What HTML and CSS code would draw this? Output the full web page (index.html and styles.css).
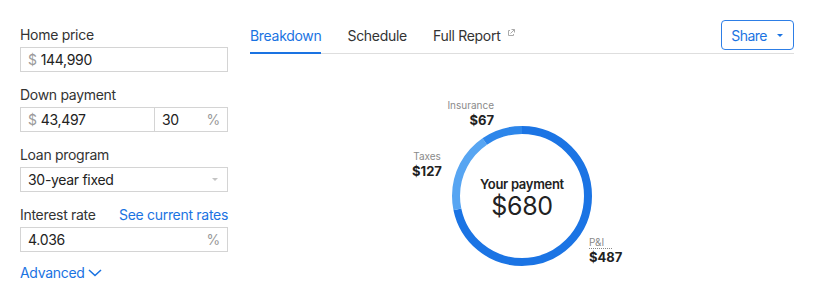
FILE: index.html
```html
<!DOCTYPE html>
<html lang="en">

<head>
    <meta charset="UTF-8">
    <meta name="viewport" content="width=device-width, initial-scale=1.0">
    <title>Mortgage Calculator</title>
    <link rel="stylesheet" href="styles.css">
</head>

<body>
    <div id="calculator">
        <div id="inputPanel">
            <div class="fieldGroup">
                <label class="fieldLabel" for="homePrice">Home price</label>
                <div class="field">
                    <span class="prefix">$</span>
                    <input type="text" id="homePrice" value="144,990">
                </div>
            </div>

            <div class="fieldGroup">
                <label class="fieldLabel" for="downPayment">Down payment</label>
                <div class="fieldPair">
                    <div class="field amountField">
                        <span class="prefix">$</span>
                        <input type="text" id="downPayment" value="43,497">
                    </div>
                    <div class="field percentField">
                        <input type="text" id="downPercent" value="30">
                        <span class="suffix">%</span>
                    </div>
                </div>
            </div>

            <div class="fieldGroup">
                <label class="fieldLabel" for="loanProgram">Loan program</label>
                <div class="field selectField">
                    <span id="loanProgram" class="selectValue">30-year fixed</span>
                    <span class="selectCaret"></span>
                </div>
            </div>

            <div class="fieldGroup">
                <div class="labelRow">
                    <label class="fieldLabel" for="interestRate">Interest rate</label>
                    <a href="#" class="link">See current rates</a>
                </div>
                <div class="field">
                    <input type="text" id="interestRate" value="4.036">
                    <span class="suffix">%</span>
                </div>
            </div>

            <a href="#" class="link advanced">Advanced
                <svg width="14" height="8" viewBox="0 0 14 8">
                    <polyline points="1,1 7,6.5 13,1" fill="none" stroke="currentColor" stroke-width="1.6" />
                </svg>
            </a>
        </div>

        <div id="resultPanel">
            <div id="tabBar">
                <nav class="tabs">
                    <a href="#" class="tab active">Breakdown</a>
                    <a href="#" class="tab">Schedule</a>
                    <a href="#" class="tab">Full Report
                        <svg class="extIcon" width="8" height="8" viewBox="0 0 8 8">
                            <path d="M3 1.5H1.5v5h5V5" fill="none" stroke="currentColor" stroke-width="1" />
                            <path d="M4.5 0.5h3v3M7.5 0.5L3.5 4.5" fill="none" stroke="currentColor" stroke-width="1" />
                        </svg>
                    </a>
                </nav>
                <button class="shareButton">Share <span class="shareCaret"></span></button>
            </div>

            <div id="chart">
                <div class="donut">
                    <svg width="140" height="140" viewBox="0 0 140 140">
                        <g transform="rotate(-90 70 70)" fill="none" stroke-width="8">
                            <circle cx="70" cy="70" r="66" stroke="#1b74e4" stroke-dasharray="297.0 414.69" />
                            <circle cx="70" cy="70" r="66" stroke="#57a5f2" stroke-dasharray="77.46 414.69" stroke-dashoffset="-297.0" />
                            <circle cx="70" cy="70" r="66" stroke="#2d86ea" stroke-dasharray="40.85 414.69" stroke-dashoffset="-374.46" />
                        </g>
                    </svg>
                    <div class="donutCenter">
                        <div class="paymentLabel">Your payment</div>
                        <div class="paymentValue">$680</div>
                    </div>
                </div>

                <div class="sliceLabel insurance">
                    <div class="sliceName">Insurance</div>
                    <div class="sliceAmount">$67</div>
                </div>
                <div class="sliceLabel taxes">
                    <div class="sliceName">Taxes</div>
                    <div class="sliceAmount">$127</div>
                </div>
                <div class="sliceLabel principal">
                    <div class="sliceName"><span class="dotted">P&amp;I</span></div>
                    <div class="sliceAmount">$487</div>
                </div>
            </div>
        </div>
    </div>
</body>

</html>
```

FILE: styles.css
```css
* {
    box-sizing: border-box;
}

body {
    margin: 0;
    font-family: Inter, "Liberation Sans", sans-serif;
    letter-spacing: -0.3px;
    color: #333333;
    background-color: #ffffff;
}

#calculator {
    display: flex;
    gap: 22px;
    padding: 25px 21px 0 20px;
}

#inputPanel {
    width: 208px;
    flex-shrink: 0;
}

.fieldGroup {
    margin-bottom: 13px;
}

.fieldLabel {
    display: block;
    font-size: 14px;
    line-height: 18px;
    padding-top: 1px;
    margin-bottom: 3px;
}

.labelRow {
    display: flex;
    justify-content: space-between;
    align-items: baseline;
}

.link {
    color: #1a73e2;
    text-decoration: none;
    font-size: 14px;
    line-height: 18px;
}

.field {
    display: flex;
    align-items: center;
    height: 25px;
    border: 1px solid #d4d4d4;
    padding: 0 7px;
    font-size: 14px;
}

.field input {
    flex: 1;
    width: 0;
    min-width: 0;
    border: none;
    outline: none;
    padding: 0;
    background: transparent;
    font: inherit;
    letter-spacing: inherit;
    color: #222222;
}

.prefix {
    color: #9a9a9a;
    margin-right: 4px;
}

.suffix {
    color: #9a9a9a;
}

.fieldPair {
    display: flex;
}

.amountField {
    width: 135px;
}

.percentField {
    flex: 1;
    border-left: none;
}

.selectField {
    justify-content: space-between;
    color: #222222;
}

.selectCaret {
    width: 0;
    height: 0;
    border-left: 3px solid transparent;
    border-right: 3px solid transparent;
    border-top: 3px solid #c4c4c4;
    margin-right: 2px;
}

.advanced {
    display: flex;
    width: max-content;
    align-items: center;
    gap: 3px;
    margin-top: -1px;
}

#resultPanel {
    flex: 1;
}

#tabBar {
    display: flex;
    justify-content: space-between;
    align-items: flex-start;
    height: 29px;
    border-bottom: 1px solid #dedede;
}

.tabs {
    display: flex;
    gap: 26px;
}

.tab {
    font-size: 14px;
    line-height: 18px;
    color: #333333;
    text-decoration: none;
    padding-top: 2px;
    padding-bottom: 7px;
    border-bottom: 2px solid transparent;
}

.tab.active {
    color: #1a73e2;
    border-bottom-color: #1a73e2;
}

.extIcon {
    color: #aaaaaa;
    margin-left: 3px;
    vertical-align: 4px;
}

.shareButton {
    margin-top: -5px;
    height: 30px;
    padding: 0 10px 0 9px;
    background: #ffffff;
    border: 1px solid #2d7ee6;
    border-radius: 4px;
    color: #1a73e2;
    font-family: inherit;
    font-size: 14px;
    letter-spacing: -0.5px;
    display: flex;
    align-items: center;
    gap: 10px;
}

.shareCaret {
    width: 0;
    height: 0;
    border-left: 3px solid transparent;
    border-right: 3px solid transparent;
    border-top: 3px solid #1a73e2;
}

#chart {
    position: relative;
    height: 240px;
    padding-top: 72px;
}

.donut {
    position: relative;
    width: 140px;
    height: 140px;
    margin: 0 auto;
}

.donut svg {
    display: block;
}

.donutCenter {
    position: absolute;
    inset: 0;
    display: flex;
    flex-direction: column;
    align-items: center;
    justify-content: center;
    padding-top: 3px;
}

.paymentLabel {
    font-size: 13px;
    font-weight: 600;
    line-height: 16px;
    color: #222222;
}

.paymentValue {
    font-size: 25px;
    line-height: 28px;
    color: #222222;
}

.sliceLabel {
    position: absolute;
    letter-spacing: 0;
}

.sliceName {
    font-size: 10px;
    line-height: 14px;
    color: #8a8a8a;
}

.sliceAmount {
    font-size: 13px;
    font-weight: 700;
    line-height: 16px;
    color: #222222;
}

.insurance {
    top: 44px;
    left: 194px;
    width: 50px;
    text-align: right;
}

.taxes {
    top: 95px;
    left: 157px;
    width: 40px;
    text-align: center;
}

.principal {
    top: 181px;
    left: 339px;
}

.dotted {
    display: inline-block;
    width: 23px;
    border-bottom: 1px dotted #888888;
    line-height: 12px;
}
```
